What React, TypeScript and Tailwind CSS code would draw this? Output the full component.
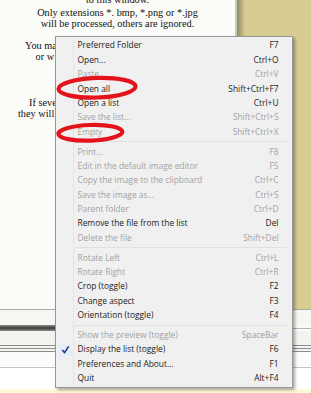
import { Fragment } from 'react';

type Item = { label: string; keys: string; off?: boolean; checked?: boolean } | 'sep';

const items: Item[] = [
  { label: 'Preferred Folder', keys: 'F7' },
  { label: 'Open...', keys: 'Ctrl+O' },
  { label: 'Paste', keys: 'Ctrl+V', off: true },
  { label: 'Open all', keys: 'Shift+Ctrl+F7' },
  { label: 'Open a list', keys: 'Ctrl+U' },
  { label: 'Save the list...', keys: 'Shift+Ctrl+S', off: true },
  { label: 'Empty', keys: 'Shift+Ctrl+X', off: true },
  'sep',
  { label: 'Print...', keys: 'F8', off: true },
  { label: 'Edit in the default image editor', keys: 'F5', off: true },
  { label: 'Copy the image to the clipboard', keys: 'Ctrl+C', off: true },
  { label: 'Save the image as...', keys: 'Ctrl+S', off: true },
  { label: 'Parent folder', keys: 'Ctrl+D', off: true },
  { label: 'Remove the file from the list', keys: 'Del' },
  { label: 'Delete the file', keys: 'Shift+Del', off: true },
  'sep',
  { label: 'Rotate Left', keys: 'Ctrl+L', off: true },
  { label: 'Rotate Right', keys: 'Ctrl+R', off: true },
  { label: 'Crop (toggle)', keys: 'F2' },
  { label: 'Change aspect', keys: 'F3' },
  { label: 'Orientation (toggle)', keys: 'F4' },
  'sep',
  { label: 'Show the preview (toggle)', keys: 'SpaceBar', off: true },
  { label: 'Display the list (toggle)', keys: 'F6', checked: true },
  { label: 'Preferences and About...', keys: 'F1' },
  { label: 'Quit', keys: 'Alt+F4' },
];

function ContextMenu() {
  return (
    <div className="absolute left-[55px] top-[36px] w-[238px] border border-[#979797] bg-[#f0f0f0] py-[1.5px] shadow-[2px_2px_3px_rgba(0,0,0,0.35)] font-['Open_Sans',sans-serif] text-[8.4px]">
      {/* gutter line */}
      <div className="absolute left-[17px] top-[1px] bottom-[1px] w-[1px] bg-[#e4e5e5]" />
      {items.map((it, i) =>
        it === 'sep' ? (
          <div key={i} className="flex h-[5.3px] items-center pl-[19px] pr-[5px]">
            <div className="h-[1px] w-full bg-[#e0e0e0]" />
          </div>
        ) : (
          <div
            key={i}
            className={`relative flex h-[14.4px] items-center justify-between pl-[21.5px] pr-[13.5px] leading-none ${
              it.off ? 'text-[#a2a2a2]' : 'text-[#222]'
            }`}
          >
            {it.checked && (
              <div className="absolute left-[2px] top-[0.5px] flex h-[13px] w-[14px] items-center justify-center rounded-[2px] bg-[#e6eefa]">
                <svg width="9" height="9" viewBox="0 0 10 10">
                  <path d="M1.5 5.5 L4 8.5 L8.5 1.5" fill="none" stroke="#17348a" strokeWidth="1.7" strokeLinejoin="round" />
                </svg>
              </div>
            )}
            <span>{it.label}</span>
            <span>{it.keys}</span>
          </div>
        )
      )}
    </div>
  );
}

export default function App() {
  return (
    <div className="relative h-[393px] w-[311px] overflow-hidden bg-[#fbfbf7]">
      {/* upper part: viewer window + desktop */}
      <div className="flex h-[309px]">
        <div className="w-[235px] overflow-hidden bg-[#fbfbf7] font-['Liberation_Serif',serif] text-[10.3px] leading-[11px] text-[#111]">
          <div className="-mt-[6px] text-center">to this window.</div>
          <div className="mt-[2px] text-center">Only extensions *. bmp, *.png or *.jpg</div>
          <div className="text-center">will be processed, others are ignored.</div>
          <div className="mt-[11px] pl-[25px] whitespace-nowrap">You may also paste an image or a list</div>
          <div className="pl-[35.5px] whitespace-nowrap">or w</div>
          <div className="mt-[35px] pl-[29px] whitespace-nowrap">If several files are dropped,</div>
          <div className="pl-[18px] whitespace-nowrap">they will</div>
        </div>
        <div className="w-[2px] bg-[#c9c9c4]" />
        <div className="w-[8px] bg-gradient-to-r from-[#8f8a62] to-[#d8cc93]" />
        <div className="flex-1 bg-[#d8cc93]" />
      </div>

      {/* lower part: panels under the menu */}
      <div className="h-[1px] bg-[#a9a9a9]" />
      <div className="h-[15px] bg-[#f6f6f2]" />
      <div className="flex h-[6px]">
        <div className="w-[60px] bg-gradient-to-b from-[#8a8a8a] via-[#3f3f3f] to-[#8a8a8a]" />
        <div className="flex flex-1 flex-col justify-center">
          <div className="h-[1px] bg-[#b5b5b5]" />
        </div>
      </div>
      <div className="h-[14px] bg-[#f3f3f0]" />
      <div className="h-[1px] bg-[#8d8d8d]" />
      <div className="h-[2px] bg-[#f3f3f0]" />
      <div className="h-[1px] bg-[#8d8d8d]" />
      <div className="h-[2px] bg-[#f3f3f0]" />
      <div className="h-[1px] bg-[#8d8d8d]" />
      <div className="h-[15px] bg-[#fbfbfb]" />
      <div className="h-[1px] bg-[#c4c4c4]" />
      <div className="h-[21px] bg-white" />
      <div className="h-[4px] bg-[#fdfbd6]" />

      <ContextMenu />

      {/* red marks drawn over the screenshot */}
      <svg className="pointer-events-none absolute left-0 top-0" width="311" height="393">
        <ellipse cx="97" cy="87.7" rx="38.5" ry="9.8" fill="none" stroke="#e3121b" strokeWidth="4.2" transform="rotate(-2 97 87.7)" />
        <ellipse cx="90.4" cy="132.8" rx="32" ry="7.8" fill="none" stroke="#e3121b" strokeWidth="4.2" transform="rotate(-2 90.4 132.8)" />
      </svg>
    </div>
  );
}
